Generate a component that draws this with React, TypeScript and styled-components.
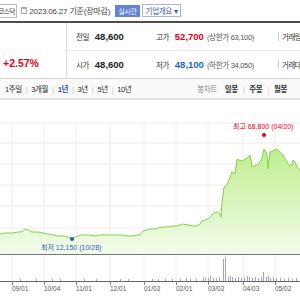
import React from "react";
import styled, { createGlobalStyle } from "styled-components";

const GlobalStyle = createGlobalStyle`
  html, body {
    margin: 0;
    padding: 0;
    background: #ffffff;
    overflow: hidden;
  }
  body {
    font-family: "Liberation Sans", "Noto Sans CJK KR", sans-serif;
    color: #333333;
  }
`;

const pricePoints: [number, number][] = [
  [0, 232], [5, 231], [13, 231], [18, 230], [22, 230], [25, 227], [28, 228],
  [32, 230], [38, 230], [43, 231], [48, 232], [53, 233], [58, 234], [63, 234],
  [67, 235], [72, 236], [76, 235], [80, 233], [85, 233], [90, 233], [95, 234],
  [100, 233], [105, 233], [110, 233], [117, 233], [122, 233], [128, 234],
  [133, 234], [137, 233], [140, 233], [143, 229], [147, 228], [150, 227],
  [155, 227], [158, 226], [163, 225], [168, 225], [172, 224], [177, 224],
  [183, 222], [188, 223], [193, 224], [197, 224], [200, 222], [202, 219],
  [205, 218], [208, 217], [210, 215], [213, 212], [215, 210], [218, 210],
  [220, 212], [221, 215], [222, 200], [224, 185], [226, 184], [227, 183],
  [229, 178], [232, 170], [234, 171], [235, 172], [237, 157], [239, 158],
  [242, 159], [244, 158], [247, 156], [249, 154], [250, 153], [251, 158],
  [252, 165], [254, 164], [256, 163], [258, 162], [260, 160], [262, 156],
  [264, 147], [266, 150], [267, 153], [268, 167], [269, 158], [270, 150],
  [273, 149], [275, 148], [277, 147], [280, 150], [283, 153], [285, 157],
  [288, 162], [290, 164], [292, 163], [293, 158], [295, 160], [297, 165],
  [300, 168],
];

// x, top of bar (bottom sits on the axis at 279)
const volumeBars: [number, number][] = [
  [20, 277], [36, 277], [52, 277], [60, 277], [84, 277], [96, 277],
  [120, 277], [128, 277], [152, 277], [158, 277], [165, 277], [172, 277],
  [180, 277], [186, 276], [190, 277], [196, 277], [203, 275], [205, 276],
  [208, 276], [210, 274], [213, 276], [216, 276], [219, 275], [223, 257],
  [225, 255], [228, 275], [230, 274], [232, 275], [235, 276], [238, 275],
  [241, 276], [244, 275], [247, 274], [249, 275], [252, 276], [255, 275],
  [258, 276], [261, 275], [263, 270], [266, 275], [268, 274], [270, 276],
  [273, 275], [276, 276], [280, 276], [284, 277], [288, 276], [292, 277],
  [296, 276],
];

const hGrid = [121, 141, 162, 183, 204, 226];
const vGrid = [12, 44, 76, 110, 144, 176, 208, 243, 275];
const dateLabels: [number, string][] = [
  [12, "09/01"], [44, "10/04"], [76, "11/01"], [110, "12/01"],
  [144, "01/02"], [176, "02/01"], [208, "03/02"], [243, "04/03"], [275, "05/02"],
];

const periods = ["1주일", "3개월", "1년", "3년", "5년", "10년"];
const candleTypes = ["일봉", "주봉", "월봉"];

function PriceChart() {
  const line = pricePoints.map(([x, y], i) => `${i ? "L" : "M"}${x},${y}`).join(" ");
  const area = `${line} L300,252 L0,252 Z`;
  return (
    <ChartSvg viewBox="0 98 300 202" width={300} height={202}>
      <defs>
        <linearGradient id="priceFill" x1="0" y1="0" x2="0" y2="1">
          <stop offset="0%" stopColor="#bfee8e" />
          <stop offset="100%" stopColor="#f3fcec" />
        </linearGradient>
      </defs>
      {hGrid.map((y) => (
        <line key={y} x1={0} x2={300} y1={y} y2={y} stroke="#ececec" />
      ))}
      {vGrid.map((x) => (
        <line key={x} x1={x} x2={x} y1={121} y2={279} stroke="#ececec" />
      ))}
      <path d={area} fill="url(#priceFill)" />
      <path d={line} fill="none" stroke="#7dd44a" strokeWidth={1} />
      <line x1={0} x2={300} y1={252.5} y2={252.5} stroke="#777777" />
      {volumeBars.map(([x, top]) => (
        <rect key={x} x={x} y={top} width={1} height={279 - top} fill="#a89cd6" />
      ))}
      <line x1={0} x2={300} y1={279.5} y2={279.5} stroke="#666666" />
      {dateLabels.map(([x, label]) => (
        <g key={label}>
          <line x1={x + 0.5} x2={x + 0.5} y1={280} y2={283} stroke="#888888" />
          <AxisText x={x} y={289}>{label}</AxisText>
        </g>
      ))}
      <circle cx={264} cy={133} r={2} fill="#e8001c" />
      <MarkText x={233} y={127} fill="#e8001c">최고 68,800 (04/20)</MarkText>
      <circle cx={72} cy={237} r={2} fill="#1f58c6" />
      <MarkText x={41} y={248} fill="#2a5cc0">최저 12,150 (10/28)</MarkText>
    </ChartSvg>
  );
}

export default function App() {
  return (
    <Page>
      <GlobalStyle />
      <TopBar>
        <MarketTag>코스닥</MarketTag>
        <CalendarIcon viewBox="0 0 6 7" width={6} height={7}>
          <rect x={0.5} y={0.5} width={5} height={6} fill="#fff" stroke="#aaa" />
          <rect x={0.5} y={0.5} width={5} height={1.5} fill="#aaa" />
        </CalendarIcon>
        <DateText>2023.06.27 기준(장마감)</DateText>
        <LiveBadge>실시간</LiveBadge>
        <InfoButton>기업개요 ▾</InfoButton>
      </TopBar>

      <Summary>
        <RateCell>
          <Rate>+2.57%</Rate>
        </RateCell>
        <Rows>
          <Row>
            <Cell $width={80}>
              <Label>전일</Label>
              <Value>48,600</Value>
            </Cell>
            <Cell $width={131}>
              <Label>고가</Label>
              <Value $tone="up">52,700</Value>
              <Note>(상한가 63,100)</Note>
            </Cell>
            <EdgeCell>거래량</EdgeCell>
          </Row>
          <Row>
            <Cell $width={80}>
              <Label>시가</Label>
              <Value>48,600</Value>
            </Cell>
            <Cell $width={131}>
              <Label>저가</Label>
              <Value $tone="down">48,100</Value>
              <Note>(하한가 34,050)</Note>
            </Cell>
            <EdgeCell>거래대금</EdgeCell>
          </Row>
        </Rows>
      </Summary>

      <TabBar>
        <TabGroup>
          {periods.map((p) => (
            <Tab key={p} $active={p === "1년"}>
              {p}
            </Tab>
          ))}
        </TabGroup>
        <ChartTypes>
          <TypeLabel>봉차트</TypeLabel>
          <TabGroup>
            {candleTypes.map((t) => (
              <Tab key={t} $strong>
                {t}
              </Tab>
            ))}
          </TabGroup>
        </ChartTypes>
      </TabBar>

      <PriceChart />
    </Page>
  );
}

const Page = styled.div`
  width: 340px;
`;

const TopBar = styled.div`
  height: 21px;
  display: flex;
  align-items: center;
  border-bottom: 2px solid #4d4d4d;
  font-size: 8px;
`;

const MarketTag = styled.span`
  margin-left: -5px;
  padding: 1px 2px;
  border: 1px solid #bbbbbb;
  color: #444444;
  font-size: 7px;
  letter-spacing: -1px;
`;

const CalendarIcon = styled.svg`
  margin-left: 4px;
`;

const DateText = styled.span`
  margin-left: 2px;
  color: #444444;
  letter-spacing: -0.2px;
`;

const LiveBadge = styled.span`
  margin-left: 5px;
  padding: 1px 3px;
  background: #6283d6;
  color: #ffffff;
  font-size: 7px;
  letter-spacing: -0.3px;
`;

const InfoButton = styled.span`
  margin-left: 2px;
  padding: 0 3px;
  border: 1px solid #a8b6d8;
  color: #3e5aa4;
  font-size: 7.5px;
  letter-spacing: -0.3px;
`;

const Summary = styled.div`
  display: flex;
  border-bottom: 1px solid #d4d4d4;
`;

const RateCell = styled.div`
  width: 67px;
  display: flex;
  align-items: flex-end;
  padding: 0 0 9px 3px;
  box-sizing: border-box;
  border-right: 1px solid #dddddd;
`;

const Rate = styled.span`
  color: #e3001b;
  font-weight: 700;
  font-size: 10.5px;
`;

const Rows = styled.div`
  flex: 1;
  display: flex;
  flex-direction: column;
`;

const Row = styled.div`
  height: 27px;
  display: flex;
  align-items: center;
  & + & {
    border-top: 1px solid #e6e6e6;
  }
`;

const Cell = styled.div<{ $width: number }>`
  width: ${(p) => p.$width}px;
  display: flex;
  align-items: baseline;
  padding-left: 9px;
  box-sizing: border-box;
`;

const Label = styled.span`
  font-size: 7.5px;
  color: #333333;
  letter-spacing: -0.5px;
  margin-right: 6px;
`;

const Value = styled.span<{ $tone?: "up" | "down" }>`
  font-size: 9.5px;
  font-weight: 700;
  color: ${(p) => (p.$tone === "up" ? "#dd0018" : p.$tone === "down" ? "#1f5fd4" : "#222222")};
`;

const Note = styled.span`
  margin-left: 3px;
  font-size: 7.5px;
  color: #555555;
  letter-spacing: -0.3px;
`;

const EdgeCell = styled.div`
  padding-left: 3px;
  border-left: 1px solid #cccccc;
  height: 9px;
  display: flex;
  align-items: center;
  font-size: 7.5px;
  color: #333333;
  letter-spacing: -0.5px;
`;

const TabBar = styled.div`
  height: 19px;
  display: flex;
  align-items: center;
  padding-left: 5px;
  background: #fafafa;
  border-bottom: 2px solid #e2e2e6;
`;

const TabGroup = styled.div`
  display: flex;
  align-items: center;
`;

const ChartTypes = styled.div`
  display: flex;
  align-items: center;
  margin-left: 66px;
`;

const Tab = styled.span<{ $active?: boolean; $strong?: boolean }>`
  font-size: 7.5px;
  font-weight: ${(p) => (p.$active || p.$strong ? 700 : 400)};
  color: ${(p) => (p.$active ? "#2456b8" : "#2a2a2a")};
  letter-spacing: -0.4px;
  &:not(:first-child)::before {
    content: "|";
    color: #c8c8c8;
    margin: 0 ${(p) => (p.$strong ? 5 : 4)}px;
    font-weight: 400;
  }
`;

const TypeLabel = styled.span`
  font-size: 7.5px;
  color: #888888;
  letter-spacing: -0.4px;
  margin-right: 8px;
`;

const ChartSvg = styled.svg`
  display: block;
`;

const AxisText = styled.text`
  font-size: 6.5px;
  fill: #555555;
  font-family: "Liberation Sans", sans-serif;
`;

const MarkText = styled.text`
  font-size: 7px;
  font-family: "Liberation Sans", "Noto Sans CJK KR", sans-serif;
`;
